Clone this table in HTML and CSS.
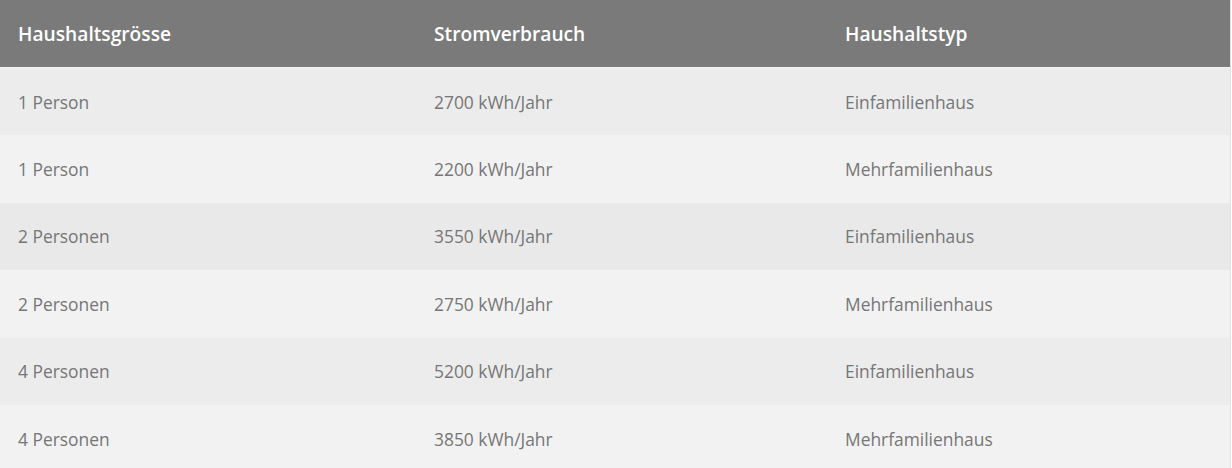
FILE: index.html
```html
<!DOCTYPE html>
<html lang="de">
<head>
<meta charset="utf-8">
<title>Stromverbrauch</title>
<link rel="stylesheet" href="styles.css">
</head>
<body>
<div class="table">
  <div class="row head">
    <div class="cell">Haushaltsgrösse</div>
    <div class="cell">Stromverbrauch</div>
    <div class="cell">Haushaltstyp</div>
  </div>
  <div class="row odd">
    <div class="cell">1 Person</div>
    <div class="cell">2700 kWh/Jahr</div>
    <div class="cell">Einfamilienhaus</div>
  </div>
  <div class="row even">
    <div class="cell">1 Person</div>
    <div class="cell">2200 kWh/Jahr</div>
    <div class="cell">Mehrfamilienhaus</div>
  </div>
  <div class="row odd dark">
    <div class="cell">2 Personen</div>
    <div class="cell">3550 kWh/Jahr</div>
    <div class="cell">Einfamilienhaus</div>
  </div>
  <div class="row even">
    <div class="cell">2 Personen</div>
    <div class="cell">2750 kWh/Jahr</div>
    <div class="cell">Mehrfamilienhaus</div>
  </div>
  <div class="row odd">
    <div class="cell">4 Personen</div>
    <div class="cell">5200 kWh/Jahr</div>
    <div class="cell">Einfamilienhaus</div>
  </div>
  <div class="row even">
    <div class="cell">4 Personen</div>
    <div class="cell">3850 kWh/Jahr</div>
    <div class="cell">Mehrfamilienhaus</div>
  </div>
</div>
</body>
</html>
```
FILE: styles.css
```css
html, body {
  margin: 0;
  padding: 0;
  background: #ffffff;
}
body {
  font-family: "Open Sans", "Liberation Sans", sans-serif;
}
.table {
  width: 1230px;
  border-right: 1px solid #e2e2e2;
}
.row {
  display: grid;
  grid-template-columns: 416px 411px 1fr;
  height: 67.4px;
  align-items: center;
}
.cell {
  padding-left: 18px;
  white-space: nowrap;
}
.head {
  height: 67px;
  background: #7a7a7a;
  color: #ffffff;
  font-size: 19.2px;
  font-weight: 600;
  border-bottom: 1px solid #f4f4f4;
}
.odd, .even {
  font-size: 17.4px;
  color: #767676;
}
.odd {
  background: #ececec;
}
.dark {
  background: #e9e9e9;
}
.even {
  background: #f2f2f2;
}
```
